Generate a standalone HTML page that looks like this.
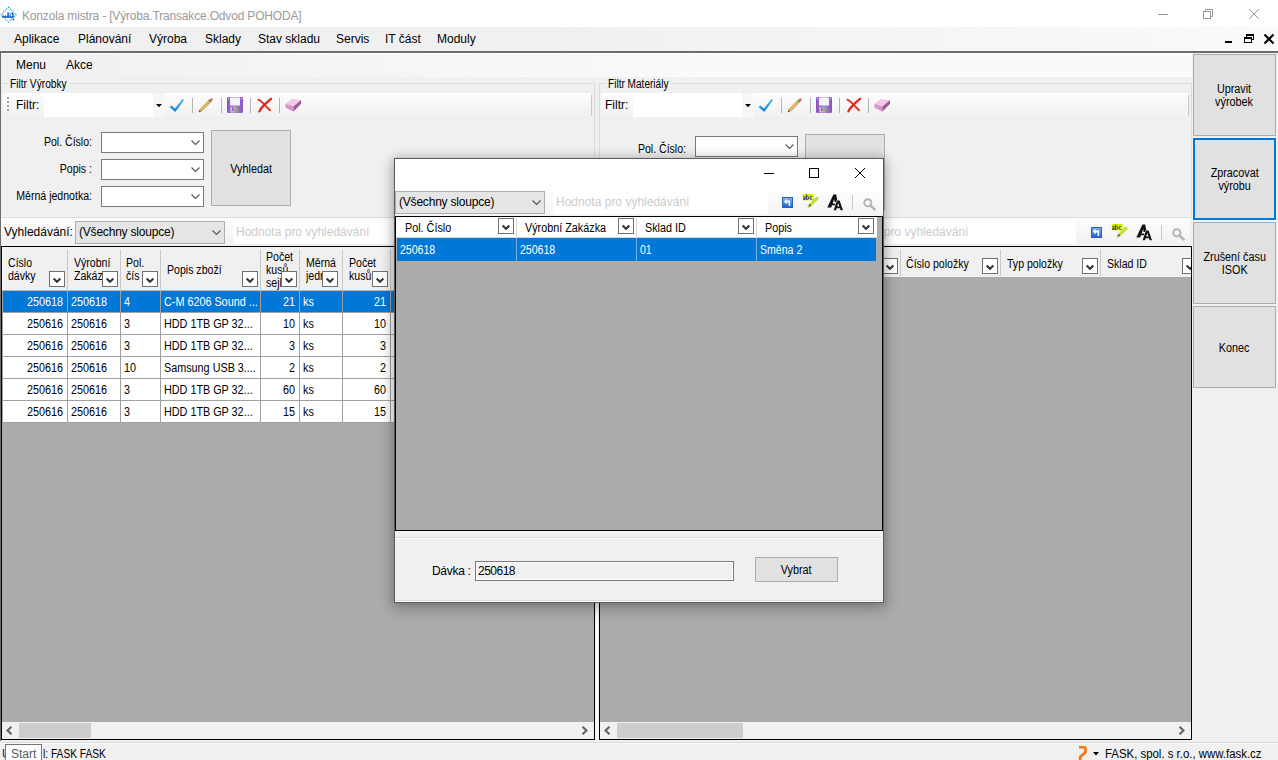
<!DOCTYPE html><html><head><meta charset="utf-8"><style>
*{margin:0;padding:0;box-sizing:border-box}
html,body{width:1278px;height:760px;overflow:hidden;background:#f0f0f0;font-family:"Liberation Sans",sans-serif;color:#000}
div{position:absolute}
.t{white-space:nowrap;font-size:11px;line-height:13px}
.m{white-space:nowrap;font-size:12px;line-height:14px}
.ms{white-space:nowrap;font-size:12px;line-height:14px;transform:scaleX(.88);transform-origin:0 0}
.msr{white-space:nowrap;font-size:12px;line-height:14px;transform:scaleX(.88);transform-origin:100% 0;text-align:right}
svg{position:absolute;overflow:visible}
</style></head><body>
<div style="left:0px;top:0px;width:1278px;height:27px;background:#fff"></div>
<svg style="left:0px;top:6px" width="18" height="18" viewBox="0 0 18 18">
<path d="M8.6 1.1 L16.2 8.7 L8.6 16.3 L1 8.7 Z" fill="none" stroke="#23a0e8" stroke-width="1.1" stroke-dasharray="1.2 0.9"/>
<path d="M2.2 11 H12.8 M3.2 11 V9.3 M5.6 11 V9.6 M8 6.2 V11 M11.6 6.6 Q13.6 8.2 13 11.6" fill="none" stroke="#0a52c8" stroke-width="1.3"/>
<circle cx="9.6" cy="8.6" r="1.1" fill="none" stroke="#0a70d8" stroke-width="0.9"/>
<circle cx="13.4" cy="13.6" r="0.9" fill="#0a52c8"/>
</svg>
<div class="m" style="left:22px;top:9px;color:#9a9a9a;letter-spacing:-0.17px">Konzola mistra - [Výroba.Transakce.Odvod POHODA]</div>
<svg style="left:1150px;top:5px" width="120" height="20">
<line x1="8" y1="9.5" x2="18" y2="9.5" stroke="#999" stroke-width="1"/>
<rect x="53.5" y="6.5" width="7" height="7" fill="none" stroke="#999"/>
<path d="M55.5 6.5 v-2 h7 v7 h-2" fill="none" stroke="#999"/>
<path d="M99 4 L109 14 M109 4 L99 14" stroke="#999" stroke-width="1"/>
</svg>
<div style="left:0px;top:27px;width:1278px;height:24px;background:linear-gradient(90deg,#f0f0f0 0,#f0f0f0 560px,#fafafa 1278px)"></div>
<div class="m" style="left:14px;top:32px;">Aplikace</div>
<div class="m" style="left:78px;top:32px;">Plánování</div>
<div class="m" style="left:149px;top:32px;">Výroba</div>
<div class="m" style="left:205px;top:32px;">Sklady</div>
<div class="m" style="left:258px;top:32px;">Stav skladu</div>
<div class="m" style="left:336px;top:32px;">Servis</div>
<div class="m" style="left:385px;top:32px;">IT část</div>
<div class="m" style="left:437px;top:32px;">Moduly</div>
<svg style="left:1220px;top:30px" width="58" height="18" shape-rendering="crispEdges">
<rect x="5" y="11" width="7" height="2" fill="#000"/>
<rect x="26" y="4" width="8" height="2" fill="#000"/><rect x="33" y="4" width="1" height="6" fill="#000"/><rect x="31" y="9" width="3" height="1" fill="#000"/><rect x="26" y="4" width="1" height="3" fill="#000"/>
<rect x="24" y="7" width="8" height="2" fill="#000"/><rect x="24" y="7" width="1" height="6" fill="#000"/><rect x="31" y="7" width="1" height="6" fill="#000"/><rect x="24" y="12" width="8" height="1" fill="#000"/>
</svg>
<svg style="left:1264px;top:34px" width="10" height="10" viewBox="0 0 10 10">
<path d="M1.2 1.2 L8.8 8.8 M8.8 1.2 L1.2 8.8" stroke="#000" stroke-width="2.1" stroke-linecap="square"/>
</svg>
<div style="left:0px;top:51px;width:1278px;height:2px;background:#6d6d6d"></div>
<div style="left:0px;top:51px;width:1px;height:690px;background:#6d6d6d"></div>
<div style="left:1px;top:53px;width:1277px;height:1px;background:#fdfdfd"></div>
<div style="left:1px;top:54px;width:1191px;height:23px;background:linear-gradient(90deg,#f0f0f0,#fafafa 60%,#fafafa)"></div>
<div class="m" style="left:16px;top:58px;">Menu</div>
<div class="m" style="left:66px;top:58px;">Akce</div>
<div style="left:2px;top:83px;width:592px;height:1px;background:#dcdcdc"></div>
<div style="left:594px;top:83px;width:1px;height:135px;background:#dcdcdc"></div>
<div style="left:8px;top:78px;width:61px;height:12px;background:#f0f0f0"></div>
<div class="ms" style="left:10px;top:77px;transform:scaleX(.85)">Filtr Výrobky</div>
<div style="left:3px;top:93px;width:589px;height:25px;background:linear-gradient(180deg,#fdfdfd,#f0f0f0);border-radius:2px"></div>
<div style="left:591px;top:95px;width:1px;height:21px;background:#c8c8c8"></div>
<div style="left:7px;top:97px;width:2px;height:2px;background:#a0a0a0"></div>
<div style="left:7px;top:101px;width:2px;height:2px;background:#a0a0a0"></div>
<div style="left:7px;top:105px;width:2px;height:2px;background:#a0a0a0"></div>
<div style="left:7px;top:109px;width:2px;height:2px;background:#a0a0a0"></div>
<div class="m" style="left:16px;top:98px;">Filtr:</div>
<div style="left:44px;top:93px;width:121px;height:24px;background:#fff"></div>
<div style="left:153px;top:93px;width:12px;height:24px;background:#f7f7f7"></div>
<svg style="left:156px;top:104px" width="6" height="4"><path d="M0 0 h6 l-3 3.2z" fill="#000"/></svg>
<svg style="left:169px;top:98px" width="16" height="15" viewBox="0 0 16 15">
<defs><linearGradient id="ck0" x1="0" y1="0" x2="0" y2="1"><stop offset="0" stop-color="#3fb6f0"/><stop offset="1" stop-color="#1a7fd8"/></linearGradient></defs>
<path d="M0.5 9 L2.5 7.5 L6 10.5 L13.5 1 L15 2 L6.3 14 Z" fill="url(#ck0)"/></svg>
<div style="left:192px;top:98px;width:1px;height:15px;background:#b4b4b4"></div>
<div style="left:221px;top:98px;width:1px;height:15px;background:#b4b4b4"></div>
<div style="left:250px;top:98px;width:1px;height:15px;background:#b4b4b4"></div>
<div style="left:279px;top:98px;width:1px;height:15px;background:#b4b4b4"></div>
<svg style="left:197px;top:97px" width="17" height="17" viewBox="0 0 17 17">
<path d="M2 15 L3.2 12.2 L12.6 2.8 L14.2 4.4 L4.8 13.8 Z" fill="#f0c860" stroke="#9a6a20" stroke-width="0.7"/>
<path d="M12.6 2.8 L13.8 1.6 Q14.6 1 15.4 1.8 Q16 2.6 15.4 3.2 L14.2 4.4 Z" fill="#e05a5a"/>
<path d="M11.9 3.5 L13.5 5.1" stroke="#3a9a5a" stroke-width="1.1"/>
<path d="M2 15 L2.6 13.4 L3.6 14.4 Z" fill="#333"/></svg>
<svg style="left:227px;top:97px" width="16" height="16" viewBox="0 0 16 16">
<defs><linearGradient id="fp0" x1="0" y1="0" x2="1" y2="0"><stop offset="0" stop-color="#8a50c0"/><stop offset=".5" stop-color="#b080e0"/><stop offset="1" stop-color="#8a50c0"/></linearGradient>
<linearGradient id="fs0" x1="0" y1="0" x2="1" y2="0"><stop offset="0" stop-color="#d0d0d0"/><stop offset="1" stop-color="#808080"/></linearGradient></defs>
<rect x="0" y="0" width="16" height="16" rx="1.2" fill="url(#fp0)"/>
<rect x="3" y="0.5" width="10" height="8" fill="#eef6fb"/>
<rect x="3.5" y="10" width="9" height="5.5" fill="url(#fs0)"/>
<rect x="5" y="10.5" width="1.6" height="3.5" fill="#9b5cc9"/>
<circle cx="1.5" cy="1.8" r="0.6" fill="#fff"/><circle cx="14.5" cy="1.8" r="0.6" fill="#fff"/></svg>
<svg style="left:256px;top:97px" width="17" height="17" viewBox="0 0 17 17">
<path d="M2.4 2.8 Q4 3 8.4 7.6 Q12 11.4 14 13.2" fill="none" stroke="#e4301c" stroke-width="2" stroke-linecap="round"/>
<path d="M15 1.8 Q10 6 7.6 8.6 Q4.6 11.6 3.4 14.4" fill="none" stroke="#e02818" stroke-width="2.3" stroke-linecap="round"/>
</svg>
<svg style="left:285px;top:98px" width="17" height="15" viewBox="0 0 17 15">
<path d="M0.6 6 L6.5 1.4 L16 2.2 L16 5.8 L8.4 13.4 L0.6 9.6 Z" fill="#d9a3cf"/>
<path d="M0.6 6 L6.5 1.4 L16 2.2 L8.6 8.4 Z" fill="#f0c8ea"/>
<path d="M8.6 8.4 L16 2.2 L16 5.8 L8.4 13.4 Z" fill="#9c5a90"/>
<path d="M0.6 6 L8.6 8.4 L8.4 13.4 L0.6 9.6 Z" fill="#d596c8"/>
</svg>
<div class="msr" style="left:-108px;width:200px;top:135px;">Pol. Číslo:</div>
<div class="msr" style="left:-108px;width:200px;top:162px;">Popis :</div>
<div class="msr" style="left:-108px;width:200px;top:189px;">Měrná jednotka:</div>
<div style="left:101px;top:132px;width:103px;height:21px;background:#fff;border:1px solid #7a7a7a"></div>
<svg style="left:191px;top:140px" width="9" height="5.0"><path d="M0.5 0.5 L4.5 4.5 L8.5 0.5" fill="none" stroke="#555" stroke-width="1.1"/></svg>
<div style="left:101px;top:159px;width:103px;height:21px;background:#fff;border:1px solid #7a7a7a"></div>
<svg style="left:191px;top:167px" width="9" height="5.0"><path d="M0.5 0.5 L4.5 4.5 L8.5 0.5" fill="none" stroke="#555" stroke-width="1.1"/></svg>
<div style="left:101px;top:186px;width:103px;height:21px;background:#fff;border:1px solid #7a7a7a"></div>
<svg style="left:191px;top:194px" width="9" height="5.0"><path d="M0.5 0.5 L4.5 4.5 L8.5 0.5" fill="none" stroke="#555" stroke-width="1.1"/></svg>
<div style="left:211px;top:130px;width:80px;height:76px;background:#e1e1e1;border:1px solid #adadad;"></div>
<div style="left:211px;top:130px;width:80px;height:76px;display:flex;align-items:center;justify-content:center;text-align:center;font-size:12px;line-height:13px;padding-top:2px;"><span style="display:inline-block;transform:scaleX(.9)">Vyhledat</span></div>
<div style="left:599px;top:83px;width:592px;height:1px;background:#dcdcdc"></div>
<div style="left:599px;top:83px;width:1px;height:135px;background:#dcdcdc"></div>
<div style="left:1191px;top:83px;width:1px;height:135px;background:#dcdcdc"></div>
<div style="left:606px;top:78px;width:65px;height:12px;background:#f0f0f0"></div>
<div class="ms" style="left:608px;top:77px;transform:scaleX(.84)">Filtr Materiály</div>
<div style="left:601px;top:93px;width:588px;height:25px;background:linear-gradient(180deg,#fdfdfd,#f0f0f0);border-radius:2px"></div>
<div style="left:1188px;top:95px;width:1px;height:21px;background:#c8c8c8"></div>
<div class="m" style="left:605px;top:98px;">Filtr:</div>
<div style="left:633px;top:93px;width:121px;height:24px;background:#fff"></div>
<div style="left:742px;top:93px;width:12px;height:24px;background:#f7f7f7"></div>
<svg style="left:745px;top:104px" width="6" height="4"><path d="M0 0 h6 l-3 3.2z" fill="#000"/></svg>
<svg style="left:758px;top:98px" width="16" height="15" viewBox="0 0 16 15">
<defs><linearGradient id="ck589" x1="0" y1="0" x2="0" y2="1"><stop offset="0" stop-color="#3fb6f0"/><stop offset="1" stop-color="#1a7fd8"/></linearGradient></defs>
<path d="M0.5 9 L2.5 7.5 L6 10.5 L13.5 1 L15 2 L6.3 14 Z" fill="url(#ck589)"/></svg>
<div style="left:781px;top:98px;width:1px;height:15px;background:#b4b4b4"></div>
<div style="left:810px;top:98px;width:1px;height:15px;background:#b4b4b4"></div>
<div style="left:839px;top:98px;width:1px;height:15px;background:#b4b4b4"></div>
<div style="left:868px;top:98px;width:1px;height:15px;background:#b4b4b4"></div>
<svg style="left:786px;top:97px" width="17" height="17" viewBox="0 0 17 17">
<path d="M2 15 L3.2 12.2 L12.6 2.8 L14.2 4.4 L4.8 13.8 Z" fill="#f0c860" stroke="#9a6a20" stroke-width="0.7"/>
<path d="M12.6 2.8 L13.8 1.6 Q14.6 1 15.4 1.8 Q16 2.6 15.4 3.2 L14.2 4.4 Z" fill="#e05a5a"/>
<path d="M11.9 3.5 L13.5 5.1" stroke="#3a9a5a" stroke-width="1.1"/>
<path d="M2 15 L2.6 13.4 L3.6 14.4 Z" fill="#333"/></svg>
<svg style="left:816px;top:97px" width="16" height="16" viewBox="0 0 16 16">
<defs><linearGradient id="fp589" x1="0" y1="0" x2="1" y2="0"><stop offset="0" stop-color="#8a50c0"/><stop offset=".5" stop-color="#b080e0"/><stop offset="1" stop-color="#8a50c0"/></linearGradient>
<linearGradient id="fs589" x1="0" y1="0" x2="1" y2="0"><stop offset="0" stop-color="#d0d0d0"/><stop offset="1" stop-color="#808080"/></linearGradient></defs>
<rect x="0" y="0" width="16" height="16" rx="1.2" fill="url(#fp589)"/>
<rect x="3" y="0.5" width="10" height="8" fill="#eef6fb"/>
<rect x="3.5" y="10" width="9" height="5.5" fill="url(#fs589)"/>
<rect x="5" y="10.5" width="1.6" height="3.5" fill="#9b5cc9"/>
<circle cx="1.5" cy="1.8" r="0.6" fill="#fff"/><circle cx="14.5" cy="1.8" r="0.6" fill="#fff"/></svg>
<svg style="left:845px;top:97px" width="17" height="17" viewBox="0 0 17 17">
<path d="M2.4 2.8 Q4 3 8.4 7.6 Q12 11.4 14 13.2" fill="none" stroke="#e4301c" stroke-width="2" stroke-linecap="round"/>
<path d="M15 1.8 Q10 6 7.6 8.6 Q4.6 11.6 3.4 14.4" fill="none" stroke="#e02818" stroke-width="2.3" stroke-linecap="round"/>
</svg>
<svg style="left:874px;top:98px" width="17" height="15" viewBox="0 0 17 15">
<path d="M0.6 6 L6.5 1.4 L16 2.2 L16 5.8 L8.4 13.4 L0.6 9.6 Z" fill="#d9a3cf"/>
<path d="M0.6 6 L6.5 1.4 L16 2.2 L8.6 8.4 Z" fill="#f0c8ea"/>
<path d="M8.6 8.4 L16 2.2 L16 5.8 L8.4 13.4 Z" fill="#9c5a90"/>
<path d="M0.6 6 L8.6 8.4 L8.4 13.4 L0.6 9.6 Z" fill="#d596c8"/>
</svg>
<div class="msr" style="left:486px;width:200px;top:142px;">Pol. Číslo:</div>
<div style="left:695px;top:136px;width:103px;height:21px;background:#fff;border:1px solid #7a7a7a"></div>
<svg style="left:785px;top:144px" width="9" height="5.0"><path d="M0.5 0.5 L4.5 4.5 L8.5 0.5" fill="none" stroke="#555" stroke-width="1.1"/></svg>
<div style="left:805px;top:134px;width:80px;height:76px;background:#e1e1e1;border:1px solid #adadad;"></div>
<div style="left:805px;top:134px;width:80px;height:76px;display:flex;align-items:center;justify-content:center;text-align:center;font-size:12px;line-height:13px;padding-top:2px;"><span style="display:inline-block;transform:scaleX(.9)"></span></div>
<div style="left:1px;top:217px;width:593px;height:1px;background:#dcdcdc"></div>
<div style="left:1px;top:218px;width:593px;height:28px;background:linear-gradient(180deg,#fdfdfd,#f0f0f0)"></div>
<div class="m" style="left:4px;top:225px;">Vyhledávání:</div>
<div style="left:75px;top:221px;width:150px;height:23px;background:#e5e5e5;border:1px solid #adadad"></div>
<div class="m" style="left:79px;top:225px;letter-spacing:-0.2px">(Všechny sloupce)</div>
<svg style="left:212px;top:230px" width="9" height="5.0"><path d="M0.5 0.5 L4.5 4.5 L8.5 0.5" fill="none" stroke="#555" stroke-width="1.2"/></svg>
<div style="left:233px;top:220px;width:170px;height:24px;background:#fff"></div>
<div class="m" style="left:236px;top:225px;color:#cccccc">Hodnota pro vyhledávání</div>
<div style="left:1px;top:246px;width:594px;height:494px;background:#ababab;border:1px solid #000"></div>
<div style="left:2px;top:247px;width:592px;height:43px;background:#f0f0f0;border-left:1px solid #fafafa"></div>
<div style="left:8px;top:257px;overflow:hidden;width:55px;height:33px"><div class="ms" style="position:static;line-height:13px">Číslo<br>dávky</div></div>
<div style="left:74px;top:257px;overflow:hidden;width:42px;height:33px"><div class="ms" style="position:static;line-height:13px">Výrobní<br>Zakáz</div></div>
<div style="left:126px;top:257px;overflow:hidden;width:30px;height:33px"><div class="ms" style="position:static;line-height:13px">Pol.<br>čís</div></div>
<div style="left:167px;top:264px;overflow:hidden;width:89px;height:26px"><div class="ms" style="position:static;line-height:13px">Popis zboží</div></div>
<div style="left:266px;top:251px;overflow:hidden;width:29px;height:39px"><div class="ms" style="position:static;line-height:13px">Počet<br>kusů<br>sejl</div></div>
<div style="left:306px;top:257px;overflow:hidden;width:32px;height:33px"><div class="ms" style="position:static;line-height:13px">Měrná<br>jedn</div></div>
<div style="left:349px;top:257px;overflow:hidden;width:37px;height:33px"><div class="ms" style="position:static;line-height:13px">Počet<br>kusů</div></div>
<div style="left:396px;top:257px;overflow:hidden;width:100px;height:33px"><div class="ms" style="position:static;line-height:13px"></div></div>
<div style="left:67px;top:250px;width:1px;height:40px;background:#c8c8c8"></div>
<div style="left:120px;top:250px;width:1px;height:40px;background:#c8c8c8"></div>
<div style="left:160px;top:250px;width:1px;height:40px;background:#c8c8c8"></div>
<div style="left:260px;top:250px;width:1px;height:40px;background:#c8c8c8"></div>
<div style="left:299px;top:250px;width:1px;height:40px;background:#c8c8c8"></div>
<div style="left:342px;top:250px;width:1px;height:40px;background:#c8c8c8"></div>
<div style="left:390px;top:250px;width:1px;height:40px;background:#c8c8c8"></div>
<div style="left:500px;top:250px;width:1px;height:40px;background:#c8c8c8"></div>
<div style="left:49px;top:271px;width:16px;height:16px;background:#fff;border:1px solid #707070"></div>
<svg style="left:53px;top:278px" width="8" height="5"><path d="M0.6 0.6 L4 3.8 L7.4 0.6" fill="none" stroke="#333" stroke-width="2"/></svg>
<div style="left:102px;top:271px;width:16px;height:16px;background:#fff;border:1px solid #707070"></div>
<svg style="left:106px;top:278px" width="8" height="5"><path d="M0.6 0.6 L4 3.8 L7.4 0.6" fill="none" stroke="#333" stroke-width="2"/></svg>
<div style="left:142px;top:271px;width:16px;height:16px;background:#fff;border:1px solid #707070"></div>
<svg style="left:146px;top:278px" width="8" height="5"><path d="M0.6 0.6 L4 3.8 L7.4 0.6" fill="none" stroke="#333" stroke-width="2"/></svg>
<div style="left:242px;top:271px;width:16px;height:16px;background:#fff;border:1px solid #707070"></div>
<svg style="left:246px;top:278px" width="8" height="5"><path d="M0.6 0.6 L4 3.8 L7.4 0.6" fill="none" stroke="#333" stroke-width="2"/></svg>
<div style="left:281px;top:271px;width:16px;height:16px;background:#fff;border:1px solid #707070"></div>
<svg style="left:285px;top:278px" width="8" height="5"><path d="M0.6 0.6 L4 3.8 L7.4 0.6" fill="none" stroke="#333" stroke-width="2"/></svg>
<div style="left:322px;top:271px;width:16px;height:16px;background:#fff;border:1px solid #707070"></div>
<svg style="left:326px;top:278px" width="8" height="5"><path d="M0.6 0.6 L4 3.8 L7.4 0.6" fill="none" stroke="#333" stroke-width="2"/></svg>
<div style="left:372px;top:271px;width:16px;height:16px;background:#fff;border:1px solid #707070"></div>
<svg style="left:376px;top:278px" width="8" height="5"><path d="M0.6 0.6 L4 3.8 L7.4 0.6" fill="none" stroke="#333" stroke-width="2"/></svg>
<div style="left:3px;top:291px;width:591px;height:21px;background:#0078d7"></div>
<div class="t" style="left:2px;top:296px;width:61px;text-align:right;color:#fff;font-size:12px;transform:scaleX(0.9);transform-origin:100% 0">250618</div>
<div class="t" style="left:71px;top:296px;color:#fff;font-size:12px;transform:scaleX(0.9);transform-origin:0 0">250618</div>
<div class="t" style="left:124px;top:296px;color:#fff;font-size:12px;transform:scaleX(0.9);transform-origin:0 0">4</div>
<div class="t" style="left:164px;top:296px;color:#fff;font-size:12px;transform:scaleX(0.9);transform-origin:0 0">C-M 6206 Sound ...</div>
<div class="t" style="left:260px;top:296px;width:35px;text-align:right;color:#fff;font-size:12px;transform:scaleX(0.9);transform-origin:100% 0">21</div>
<div class="t" style="left:303px;top:296px;color:#fff;font-size:12px;transform:scaleX(0.9);transform-origin:0 0">ks</div>
<div class="t" style="left:342px;top:296px;width:44px;text-align:right;color:#fff;font-size:12px;transform:scaleX(0.9);transform-origin:100% 0">21</div>
<div style="left:2px;top:312px;width:592px;height:1px;background:#a0a0a0"></div>
<div style="left:67px;top:291px;width:1px;height:22px;background:#a0a0a0"></div>
<div style="left:120px;top:291px;width:1px;height:22px;background:#a0a0a0"></div>
<div style="left:160px;top:291px;width:1px;height:22px;background:#a0a0a0"></div>
<div style="left:260px;top:291px;width:1px;height:22px;background:#a0a0a0"></div>
<div style="left:299px;top:291px;width:1px;height:22px;background:#a0a0a0"></div>
<div style="left:342px;top:291px;width:1px;height:22px;background:#a0a0a0"></div>
<div style="left:390px;top:291px;width:1px;height:22px;background:#a0a0a0"></div>
<div style="left:500px;top:291px;width:1px;height:22px;background:#a0a0a0"></div>
<div style="left:3px;top:313px;width:591px;height:21px;background:#fff"></div>
<div class="t" style="left:2px;top:318px;width:61px;text-align:right;color:#000;font-size:12px;transform:scaleX(0.9);transform-origin:100% 0">250616</div>
<div class="t" style="left:71px;top:318px;color:#000;font-size:12px;transform:scaleX(0.9);transform-origin:0 0">250616</div>
<div class="t" style="left:124px;top:318px;color:#000;font-size:12px;transform:scaleX(0.9);transform-origin:0 0">3</div>
<div class="t" style="left:164px;top:318px;color:#000;font-size:12px;transform:scaleX(0.9);transform-origin:0 0">HDD 1TB GP 32...</div>
<div class="t" style="left:260px;top:318px;width:35px;text-align:right;color:#000;font-size:12px;transform:scaleX(0.9);transform-origin:100% 0">10</div>
<div class="t" style="left:303px;top:318px;color:#000;font-size:12px;transform:scaleX(0.9);transform-origin:0 0">ks</div>
<div class="t" style="left:342px;top:318px;width:44px;text-align:right;color:#000;font-size:12px;transform:scaleX(0.9);transform-origin:100% 0">10</div>
<div style="left:2px;top:334px;width:592px;height:1px;background:#a0a0a0"></div>
<div style="left:67px;top:313px;width:1px;height:22px;background:#a0a0a0"></div>
<div style="left:120px;top:313px;width:1px;height:22px;background:#a0a0a0"></div>
<div style="left:160px;top:313px;width:1px;height:22px;background:#a0a0a0"></div>
<div style="left:260px;top:313px;width:1px;height:22px;background:#a0a0a0"></div>
<div style="left:299px;top:313px;width:1px;height:22px;background:#a0a0a0"></div>
<div style="left:342px;top:313px;width:1px;height:22px;background:#a0a0a0"></div>
<div style="left:390px;top:313px;width:1px;height:22px;background:#a0a0a0"></div>
<div style="left:500px;top:313px;width:1px;height:22px;background:#a0a0a0"></div>
<div style="left:3px;top:335px;width:591px;height:21px;background:#fff"></div>
<div class="t" style="left:2px;top:340px;width:61px;text-align:right;color:#000;font-size:12px;transform:scaleX(0.9);transform-origin:100% 0">250616</div>
<div class="t" style="left:71px;top:340px;color:#000;font-size:12px;transform:scaleX(0.9);transform-origin:0 0">250616</div>
<div class="t" style="left:124px;top:340px;color:#000;font-size:12px;transform:scaleX(0.9);transform-origin:0 0">3</div>
<div class="t" style="left:164px;top:340px;color:#000;font-size:12px;transform:scaleX(0.9);transform-origin:0 0">HDD 1TB GP 32...</div>
<div class="t" style="left:260px;top:340px;width:35px;text-align:right;color:#000;font-size:12px;transform:scaleX(0.9);transform-origin:100% 0">3</div>
<div class="t" style="left:303px;top:340px;color:#000;font-size:12px;transform:scaleX(0.9);transform-origin:0 0">ks</div>
<div class="t" style="left:342px;top:340px;width:44px;text-align:right;color:#000;font-size:12px;transform:scaleX(0.9);transform-origin:100% 0">3</div>
<div style="left:2px;top:356px;width:592px;height:1px;background:#a0a0a0"></div>
<div style="left:67px;top:335px;width:1px;height:22px;background:#a0a0a0"></div>
<div style="left:120px;top:335px;width:1px;height:22px;background:#a0a0a0"></div>
<div style="left:160px;top:335px;width:1px;height:22px;background:#a0a0a0"></div>
<div style="left:260px;top:335px;width:1px;height:22px;background:#a0a0a0"></div>
<div style="left:299px;top:335px;width:1px;height:22px;background:#a0a0a0"></div>
<div style="left:342px;top:335px;width:1px;height:22px;background:#a0a0a0"></div>
<div style="left:390px;top:335px;width:1px;height:22px;background:#a0a0a0"></div>
<div style="left:500px;top:335px;width:1px;height:22px;background:#a0a0a0"></div>
<div style="left:3px;top:357px;width:591px;height:21px;background:#fff"></div>
<div class="t" style="left:2px;top:362px;width:61px;text-align:right;color:#000;font-size:12px;transform:scaleX(0.9);transform-origin:100% 0">250616</div>
<div class="t" style="left:71px;top:362px;color:#000;font-size:12px;transform:scaleX(0.9);transform-origin:0 0">250616</div>
<div class="t" style="left:124px;top:362px;color:#000;font-size:12px;transform:scaleX(0.9);transform-origin:0 0">10</div>
<div class="t" style="left:164px;top:362px;color:#000;font-size:12px;transform:scaleX(0.9);transform-origin:0 0">Samsung USB 3....</div>
<div class="t" style="left:260px;top:362px;width:35px;text-align:right;color:#000;font-size:12px;transform:scaleX(0.9);transform-origin:100% 0">2</div>
<div class="t" style="left:303px;top:362px;color:#000;font-size:12px;transform:scaleX(0.9);transform-origin:0 0">ks</div>
<div class="t" style="left:342px;top:362px;width:44px;text-align:right;color:#000;font-size:12px;transform:scaleX(0.9);transform-origin:100% 0">2</div>
<div style="left:2px;top:378px;width:592px;height:1px;background:#a0a0a0"></div>
<div style="left:67px;top:357px;width:1px;height:22px;background:#a0a0a0"></div>
<div style="left:120px;top:357px;width:1px;height:22px;background:#a0a0a0"></div>
<div style="left:160px;top:357px;width:1px;height:22px;background:#a0a0a0"></div>
<div style="left:260px;top:357px;width:1px;height:22px;background:#a0a0a0"></div>
<div style="left:299px;top:357px;width:1px;height:22px;background:#a0a0a0"></div>
<div style="left:342px;top:357px;width:1px;height:22px;background:#a0a0a0"></div>
<div style="left:390px;top:357px;width:1px;height:22px;background:#a0a0a0"></div>
<div style="left:500px;top:357px;width:1px;height:22px;background:#a0a0a0"></div>
<div style="left:3px;top:379px;width:591px;height:21px;background:#fff"></div>
<div class="t" style="left:2px;top:384px;width:61px;text-align:right;color:#000;font-size:12px;transform:scaleX(0.9);transform-origin:100% 0">250616</div>
<div class="t" style="left:71px;top:384px;color:#000;font-size:12px;transform:scaleX(0.9);transform-origin:0 0">250616</div>
<div class="t" style="left:124px;top:384px;color:#000;font-size:12px;transform:scaleX(0.9);transform-origin:0 0">3</div>
<div class="t" style="left:164px;top:384px;color:#000;font-size:12px;transform:scaleX(0.9);transform-origin:0 0">HDD 1TB GP 32...</div>
<div class="t" style="left:260px;top:384px;width:35px;text-align:right;color:#000;font-size:12px;transform:scaleX(0.9);transform-origin:100% 0">60</div>
<div class="t" style="left:303px;top:384px;color:#000;font-size:12px;transform:scaleX(0.9);transform-origin:0 0">ks</div>
<div class="t" style="left:342px;top:384px;width:44px;text-align:right;color:#000;font-size:12px;transform:scaleX(0.9);transform-origin:100% 0">60</div>
<div style="left:2px;top:400px;width:592px;height:1px;background:#a0a0a0"></div>
<div style="left:67px;top:379px;width:1px;height:22px;background:#a0a0a0"></div>
<div style="left:120px;top:379px;width:1px;height:22px;background:#a0a0a0"></div>
<div style="left:160px;top:379px;width:1px;height:22px;background:#a0a0a0"></div>
<div style="left:260px;top:379px;width:1px;height:22px;background:#a0a0a0"></div>
<div style="left:299px;top:379px;width:1px;height:22px;background:#a0a0a0"></div>
<div style="left:342px;top:379px;width:1px;height:22px;background:#a0a0a0"></div>
<div style="left:390px;top:379px;width:1px;height:22px;background:#a0a0a0"></div>
<div style="left:500px;top:379px;width:1px;height:22px;background:#a0a0a0"></div>
<div style="left:3px;top:401px;width:591px;height:21px;background:#fff"></div>
<div class="t" style="left:2px;top:406px;width:61px;text-align:right;color:#000;font-size:12px;transform:scaleX(0.9);transform-origin:100% 0">250616</div>
<div class="t" style="left:71px;top:406px;color:#000;font-size:12px;transform:scaleX(0.9);transform-origin:0 0">250616</div>
<div class="t" style="left:124px;top:406px;color:#000;font-size:12px;transform:scaleX(0.9);transform-origin:0 0">3</div>
<div class="t" style="left:164px;top:406px;color:#000;font-size:12px;transform:scaleX(0.9);transform-origin:0 0">HDD 1TB GP 32...</div>
<div class="t" style="left:260px;top:406px;width:35px;text-align:right;color:#000;font-size:12px;transform:scaleX(0.9);transform-origin:100% 0">15</div>
<div class="t" style="left:303px;top:406px;color:#000;font-size:12px;transform:scaleX(0.9);transform-origin:0 0">ks</div>
<div class="t" style="left:342px;top:406px;width:44px;text-align:right;color:#000;font-size:12px;transform:scaleX(0.9);transform-origin:100% 0">15</div>
<div style="left:2px;top:422px;width:592px;height:1px;background:#a0a0a0"></div>
<div style="left:67px;top:401px;width:1px;height:22px;background:#a0a0a0"></div>
<div style="left:120px;top:401px;width:1px;height:22px;background:#a0a0a0"></div>
<div style="left:160px;top:401px;width:1px;height:22px;background:#a0a0a0"></div>
<div style="left:260px;top:401px;width:1px;height:22px;background:#a0a0a0"></div>
<div style="left:299px;top:401px;width:1px;height:22px;background:#a0a0a0"></div>
<div style="left:342px;top:401px;width:1px;height:22px;background:#a0a0a0"></div>
<div style="left:390px;top:401px;width:1px;height:22px;background:#a0a0a0"></div>
<div style="left:500px;top:401px;width:1px;height:22px;background:#a0a0a0"></div>
<div style="left:2px;top:290px;width:592px;height:1px;background:#b8b8b8"></div>
<div style="left:2px;top:291px;width:1px;height:132px;background:#a0a0a0"></div>
<div style="left:2px;top:722px;width:592px;height:17px;background:#f0f0f0"></div>
<div style="left:19px;top:723px;width:72px;height:15px;background:#cdcdcd"></div>
<svg style="left:6px;top:726px" width="8" height="9"><path d="M5.5 0.8 L1.5 4.5 L5.5 8.2" fill="none" stroke="#606060" stroke-width="2"/></svg>
<svg style="left:581px;top:726px" width="8" height="9"><path d="M1.5 0.8 L5.5 4.5 L1.5 8.2" fill="none" stroke="#606060" stroke-width="2"/></svg>
<div style="left:599px;top:217px;width:591px;height:1px;background:#dcdcdc"></div>
<div style="left:599px;top:218px;width:591px;height:28px;background:linear-gradient(180deg,#fdfdfd,#f0f0f0)"></div>
<div style="left:832px;top:220px;width:244px;height:24px;background:#fff"></div>
<div class="m" style="left:835px;top:225px;color:#cccccc">Hodnota pro vyhledávání</div>
<svg style="left:1091px;top:227px" width="11" height="11" viewBox="0 0 11 11">
<defs><linearGradient id="bl1091" x1="0" y1="0" x2="0" y2="1"><stop offset="0" stop-color="#7ab4f5"/><stop offset="1" stop-color="#1f5fc8"/></linearGradient></defs>
<rect x="0.5" y="0.5" width="10" height="10" fill="url(#bl1091)" stroke="#2a62c0" stroke-width="1"/>
<path d="M1.8 4.6 L4.6 1.8 V3.6 H8.2 V9 H6.6 V5.5 H4.6 V7.4 Z" fill="#fff"/></svg>
<svg style="left:1111px;top:224px" width="18" height="14" viewBox="0 0 18 14">
<rect x="0.8" y="0" width="11" height="6.4" fill="#d4f000"/>
<path d="M1.4 2.6 Q2.4 2 3.1 2.6 V5.8 M3.1 4.2 Q1.3 3.8 1.2 5 Q1.5 6 3.1 5.4 M4.6 0.3 V5.8 M4.6 3.2 Q5.5 2 6.3 2.6 Q7 3.6 6.3 5.1 Q5.4 6 4.6 5.1 M10 2.6 Q9.1 2 8.4 2.7 Q7.8 3.9 8.4 5 Q9.1 5.7 10 5.3" fill="none" stroke="#4a4070" stroke-width="1"/>
<path d="M6 13.2 L6.6 11 L14.8 3 L16.4 4.6 L8.2 12.6 Z" fill="#c8f020" stroke="#8ab010" stroke-width="0.6"/>
<path d="M6.6 11 L7.6 10 L9.2 11.6 L8.2 12.6 Z" fill="#505070"/>
<path d="M6 13.2 L6.6 11.8 L7.4 12.6 Z" fill="#b0e020"/></svg>
<svg style="left:1136px;top:224px" width="18" height="17" viewBox="0 0 18 17">
<path d="M0.3 13.6 L6.4 0.4 H9.2 L10.6 8 H7.6 L7.2 5 L4.2 13.6 Z M4.4 9.6 H8.6 V11.2 H3.8 Z" fill="#111"/>
<path d="M6.6 16.2 L10 6.4 H12.6 L16 16.2 H13.6 L13 14.2 H9.6 L9 16.2 Z M10.2 12.4 H12.4 L11.3 9 Z" fill="#111" stroke="#fff" stroke-width="1" paint-order="stroke"/></svg>
<div style="left:1161px;top:225px;width:1px;height:15px;background:#c8c8c8"></div>
<svg style="left:1172px;top:228px" width="14" height="13" viewBox="0 0 14 13">
<circle cx="4.8" cy="4.8" r="3.6" fill="none" stroke="#b4b4b4" stroke-width="1.9"/>
<path d="M7.6 7.6 L11.6 11.4" stroke="#b4b4b4" stroke-width="2.6" stroke-linecap="round"/></svg>
<div style="left:599px;top:246px;width:593px;height:494px;background:#ababab;border:1px solid #000"></div>
<div style="left:600px;top:247px;width:591px;height:30px;background:#f0f0f0"></div>
<div style="left:900px;top:250px;width:1px;height:26px;background:#c8c8c8"></div>
<div style="left:1000px;top:250px;width:1px;height:26px;background:#c8c8c8"></div>
<div style="left:1100px;top:250px;width:1px;height:26px;background:#c8c8c8"></div>
<div style="left:882px;top:258px;width:16px;height:16px;background:#fff;border:1px solid #707070"></div>
<svg style="left:886px;top:265px" width="8" height="5"><path d="M0.6 0.6 L4 3.8 L7.4 0.6" fill="none" stroke="#333" stroke-width="2"/></svg>
<div style="left:982px;top:258px;width:16px;height:16px;background:#fff;border:1px solid #707070"></div>
<svg style="left:986px;top:265px" width="8" height="5"><path d="M0.6 0.6 L4 3.8 L7.4 0.6" fill="none" stroke="#333" stroke-width="2"/></svg>
<div style="left:1082px;top:258px;width:16px;height:16px;background:#fff;border:1px solid #707070"></div>
<svg style="left:1086px;top:265px" width="8" height="5"><path d="M0.6 0.6 L4 3.8 L7.4 0.6" fill="none" stroke="#333" stroke-width="2"/></svg>
<div style="left:1182px;top:258px;width:16px;height:16px;background:#fff;border:1px solid #707070"></div>
<svg style="left:1186px;top:265px" width="8" height="5"><path d="M0.6 0.6 L4 3.8 L7.4 0.6" fill="none" stroke="#333" stroke-width="2"/></svg>
<div class="ms" style="left:906px;top:257px;">Číslo položky</div>
<div class="ms" style="left:1007px;top:257px;">Typ položky</div>
<div class="ms" style="left:1107px;top:257px;">Sklad ID</div>
<div style="left:600px;top:722px;width:592px;height:17px;background:#f0f0f0"></div>
<div style="left:617px;top:723px;width:126px;height:15px;background:#cdcdcd"></div>
<svg style="left:604px;top:726px" width="8" height="9"><path d="M5.5 0.8 L1.5 4.5 L5.5 8.2" fill="none" stroke="#606060" stroke-width="2"/></svg>
<svg style="left:1178px;top:726px" width="8" height="9"><path d="M1.5 0.8 L5.5 4.5 L1.5 8.2" fill="none" stroke="#606060" stroke-width="2"/></svg>
<div style="left:595px;top:246px;width:4px;height:494px;background:#f0f0f0"></div>
<div style="left:596px;top:246px;width:2px;height:494px;background:#fafafa"></div>
<div style="left:1192px;top:53px;width:86px;height:688px;background:#f0f0f0"></div>
<div style="left:1191px;top:246px;width:1px;height:494px;background:#000"></div>
<div style="left:1193px;top:54px;width:83px;height:82px;background:#e1e1e1;border:1px solid #adadad;"></div>
<div style="left:1193px;top:54px;width:83px;height:82px;display:flex;align-items:center;justify-content:center;text-align:center;font-size:12px;line-height:13px;padding-top:2px;"><span style="display:inline-block;transform:scaleX(.9)">Upravit<br>výrobek</span></div>
<div style="left:1193px;top:138px;width:83px;height:82px;background:#e1e1e1;border:1px solid #adadad;border:2px solid #0078d7"></div>
<div style="left:1193px;top:138px;width:83px;height:82px;display:flex;align-items:center;justify-content:center;text-align:center;font-size:12px;line-height:13px;padding-top:2px;"><span style="display:inline-block;transform:scaleX(.9)">Zpracovat<br>výrobu</span></div>
<div style="left:1193px;top:222px;width:83px;height:82px;background:#e1e1e1;border:1px solid #adadad;"></div>
<div style="left:1193px;top:222px;width:83px;height:82px;display:flex;align-items:center;justify-content:center;text-align:center;font-size:12px;line-height:13px;padding-top:2px;"><span style="display:inline-block;transform:scaleX(.9)">Zrušení času<br>ISOK</span></div>
<div style="left:1193px;top:306px;width:83px;height:82px;background:#e1e1e1;border:1px solid #adadad;"></div>
<div style="left:1193px;top:306px;width:83px;height:82px;display:flex;align-items:center;justify-content:center;text-align:center;font-size:12px;line-height:13px;padding-top:2px;"><span style="display:inline-block;transform:scaleX(.9)">Konec</span></div>
<div style="left:1px;top:740px;width:1277px;height:20px;background:#f0f0f0"></div>
<div style="left:1px;top:742px;width:1277px;height:1px;background:#dcdcdc"></div>
<div class="m" style="left:43px;top:747px;transform:scaleX(0.85);transform-origin:0 0">l: FASK FASK</div>
<div class="m" style="left:2px;top:747px;color:#3a1040">U</div>
<div style="left:5px;top:744px;width:37px;height:18px;background:#fff;border:1px solid #767676"></div>
<div class="m" style="left:11px;top:747px;color:#5a5a5a">Start</div>
<svg style="left:1078px;top:745px" width="10" height="15" viewBox="0 0 10 15">
<path d="M1 2.2 H6 Q7.4 2.2 7.4 3.6 V7.6 L2.2 11.8 V15" fill="none" stroke="#fa7208" stroke-width="2.6" stroke-linejoin="round"/></svg>
<svg style="left:1093px;top:752px" width="6" height="4"><path d="M0 0 h6 l-3 3.5z" fill="#000"/></svg>
<div style="left:1px;top:743px;width:1277px;height:1px;background:#fafafa"></div>
<div class="m" style="left:1105px;top:747px;transform:scaleX(.95);transform-origin:0 0">FASK, spol. s r.o., www.fask.cz</div>
<div style="left:394px;top:158px;width:490px;height:445px;background:#f0f0f0;border:1px solid #5a5a5a;box-shadow:0 0 9px 1px rgba(0,0,0,0.16),0 5px 14px 2px rgba(0,0,0,0.2)"></div>
<div style="left:395px;top:600px;width:488px;height:1px;background:#dcdcdc"></div>
<div style="left:395px;top:601px;width:488px;height:1px;background:#fff"></div>
<div style="left:395px;top:159px;width:488px;height:32px;background:#fff"></div>
<svg style="left:760px;top:166px" width="110" height="16">
<line x1="4" y1="7.5" x2="14" y2="7.5" stroke="#000" stroke-width="1"/>
<rect x="49.5" y="2.5" width="9" height="9" fill="none" stroke="#000" stroke-width="1"/>
<path d="M95 2 L105 12 M105 2 L95 12" stroke="#000" stroke-width="1"/>
</svg>
<div style="left:395px;top:189px;width:488px;height:27px;background:linear-gradient(180deg,#fefefe,#f3f3f3)"></div>
<div style="left:395px;top:191px;width:150px;height:23px;background:#e5e5e5;border:1px solid #adadad"></div>
<div class="m" style="left:399px;top:195px;letter-spacing:-0.2px">(Všechny sloupce)</div>
<svg style="left:532px;top:200px" width="9" height="5.0"><path d="M0.5 0.5 L4.5 4.5 L8.5 0.5" fill="none" stroke="#555" stroke-width="1.2"/></svg>
<div style="left:553px;top:191px;width:215px;height:23px;background:#fff"></div>
<div class="m" style="left:556px;top:195px;color:#cccccc">Hodnota pro vyhledávání</div>
<svg style="left:782px;top:197px" width="11" height="11" viewBox="0 0 11 11">
<defs><linearGradient id="bl782" x1="0" y1="0" x2="0" y2="1"><stop offset="0" stop-color="#7ab4f5"/><stop offset="1" stop-color="#1f5fc8"/></linearGradient></defs>
<rect x="0.5" y="0.5" width="10" height="10" fill="url(#bl782)" stroke="#2a62c0" stroke-width="1"/>
<path d="M1.8 4.6 L4.6 1.8 V3.6 H8.2 V9 H6.6 V5.5 H4.6 V7.4 Z" fill="#fff"/></svg>
<svg style="left:802px;top:194px" width="18" height="14" viewBox="0 0 18 14">
<rect x="0.8" y="0" width="11" height="6.4" fill="#d4f000"/>
<path d="M1.4 2.6 Q2.4 2 3.1 2.6 V5.8 M3.1 4.2 Q1.3 3.8 1.2 5 Q1.5 6 3.1 5.4 M4.6 0.3 V5.8 M4.6 3.2 Q5.5 2 6.3 2.6 Q7 3.6 6.3 5.1 Q5.4 6 4.6 5.1 M10 2.6 Q9.1 2 8.4 2.7 Q7.8 3.9 8.4 5 Q9.1 5.7 10 5.3" fill="none" stroke="#4a4070" stroke-width="1"/>
<path d="M6 13.2 L6.6 11 L14.8 3 L16.4 4.6 L8.2 12.6 Z" fill="#c8f020" stroke="#8ab010" stroke-width="0.6"/>
<path d="M6.6 11 L7.6 10 L9.2 11.6 L8.2 12.6 Z" fill="#505070"/>
<path d="M6 13.2 L6.6 11.8 L7.4 12.6 Z" fill="#b0e020"/></svg>
<svg style="left:827px;top:194px" width="18" height="17" viewBox="0 0 18 17">
<path d="M0.3 13.6 L6.4 0.4 H9.2 L10.6 8 H7.6 L7.2 5 L4.2 13.6 Z M4.4 9.6 H8.6 V11.2 H3.8 Z" fill="#111"/>
<path d="M6.6 16.2 L10 6.4 H12.6 L16 16.2 H13.6 L13 14.2 H9.6 L9 16.2 Z M10.2 12.4 H12.4 L11.3 9 Z" fill="#111" stroke="#fff" stroke-width="1" paint-order="stroke"/></svg>
<div style="left:852px;top:195px;width:1px;height:15px;background:#c8c8c8"></div>
<svg style="left:863px;top:198px" width="14" height="13" viewBox="0 0 14 13">
<circle cx="4.8" cy="4.8" r="3.6" fill="none" stroke="#b4b4b4" stroke-width="1.9"/>
<path d="M7.6 7.6 L11.6 11.4" stroke="#b4b4b4" stroke-width="2.6" stroke-linecap="round"/></svg>
<div style="left:395px;top:216px;width:488px;height:315px;background:#ababab;border:1px solid #000"></div>
<div style="left:396px;top:217px;width:481px;height:20px;background:#fff"></div>
<div style="left:396px;top:237px;width:481px;height:1px;background:#d8d8d8"></div>
<div style="left:516px;top:218px;width:1px;height:19px;background:#d8d8d8"></div>
<div style="left:636px;top:218px;width:1px;height:19px;background:#d8d8d8"></div>
<div style="left:756px;top:218px;width:1px;height:19px;background:#d8d8d8"></div>
<div class="ms" style="left:405px;top:221px;transform:scaleX(.9)">Pol. Číslo</div>
<div class="ms" style="left:525px;top:221px;transform:scaleX(.9)">Výrobní Zakázka</div>
<div class="ms" style="left:645px;top:221px;transform:scaleX(.9)">Sklad ID</div>
<div class="ms" style="left:765px;top:221px;transform:scaleX(.9)">Popis</div>
<div style="left:498px;top:218px;width:16px;height:16px;background:#fff;border:1px solid #707070"></div>
<svg style="left:502px;top:225px" width="8" height="5"><path d="M0.6 0.6 L4 3.8 L7.4 0.6" fill="none" stroke="#333" stroke-width="2"/></svg>
<div style="left:618px;top:218px;width:16px;height:16px;background:#fff;border:1px solid #707070"></div>
<svg style="left:622px;top:225px" width="8" height="5"><path d="M0.6 0.6 L4 3.8 L7.4 0.6" fill="none" stroke="#333" stroke-width="2"/></svg>
<div style="left:738px;top:218px;width:16px;height:16px;background:#fff;border:1px solid #707070"></div>
<svg style="left:742px;top:225px" width="8" height="5"><path d="M0.6 0.6 L4 3.8 L7.4 0.6" fill="none" stroke="#333" stroke-width="2"/></svg>
<div style="left:858px;top:218px;width:16px;height:16px;background:#fff;border:1px solid #707070"></div>
<svg style="left:862px;top:225px" width="8" height="5"><path d="M0.6 0.6 L4 3.8 L7.4 0.6" fill="none" stroke="#333" stroke-width="2"/></svg>
<div style="left:397px;top:238px;width:479px;height:23px;background:#0078d7"></div>
<div class="ms" style="left:400px;top:243px;color:#fff">250618</div>
<div class="ms" style="left:520px;top:243px;color:#fff">250618</div>
<div class="ms" style="left:640px;top:243px;color:#fff">01</div>
<div class="ms" style="left:760px;top:243px;color:#fff">Směna 2</div>
<div style="left:516px;top:238px;width:1px;height:23px;background:#7ab0e6"></div>
<div style="left:636px;top:238px;width:1px;height:23px;background:#7ab0e6"></div>
<div style="left:756px;top:238px;width:1px;height:23px;background:#7ab0e6"></div>
<div style="left:395px;top:531px;width:488px;height:1px;background:#f8f8f8"></div>
<div style="left:395px;top:537px;width:488px;height:1px;background:#dcdcdc"></div>
<div style="left:395px;top:538px;width:488px;height:1px;background:#fff"></div>
<div class="t" style="left:432px;top:565px;font-size:12px;letter-spacing:-0.3px">Dávka :</div>
<div style="left:475px;top:561px;width:259px;height:20px;background:#f0f0f0;border:1px solid #7a7a7a;box-shadow:inset 0 0 0 1px #fff"></div>
<div class="t" style="left:478px;top:565px;font-size:12px;letter-spacing:-0.5px">250618</div>
<div style="left:755px;top:557px;width:83px;height:25px;background:#e1e1e1;border:1px solid #adadad;"></div>
<div style="left:755px;top:557px;width:83px;height:25px;display:flex;align-items:center;justify-content:center;text-align:center;font-size:12px;line-height:13px;padding-top:2px;"><span style="display:inline-block;transform:scaleX(.9)">Vybrat</span></div>
</body></html>
